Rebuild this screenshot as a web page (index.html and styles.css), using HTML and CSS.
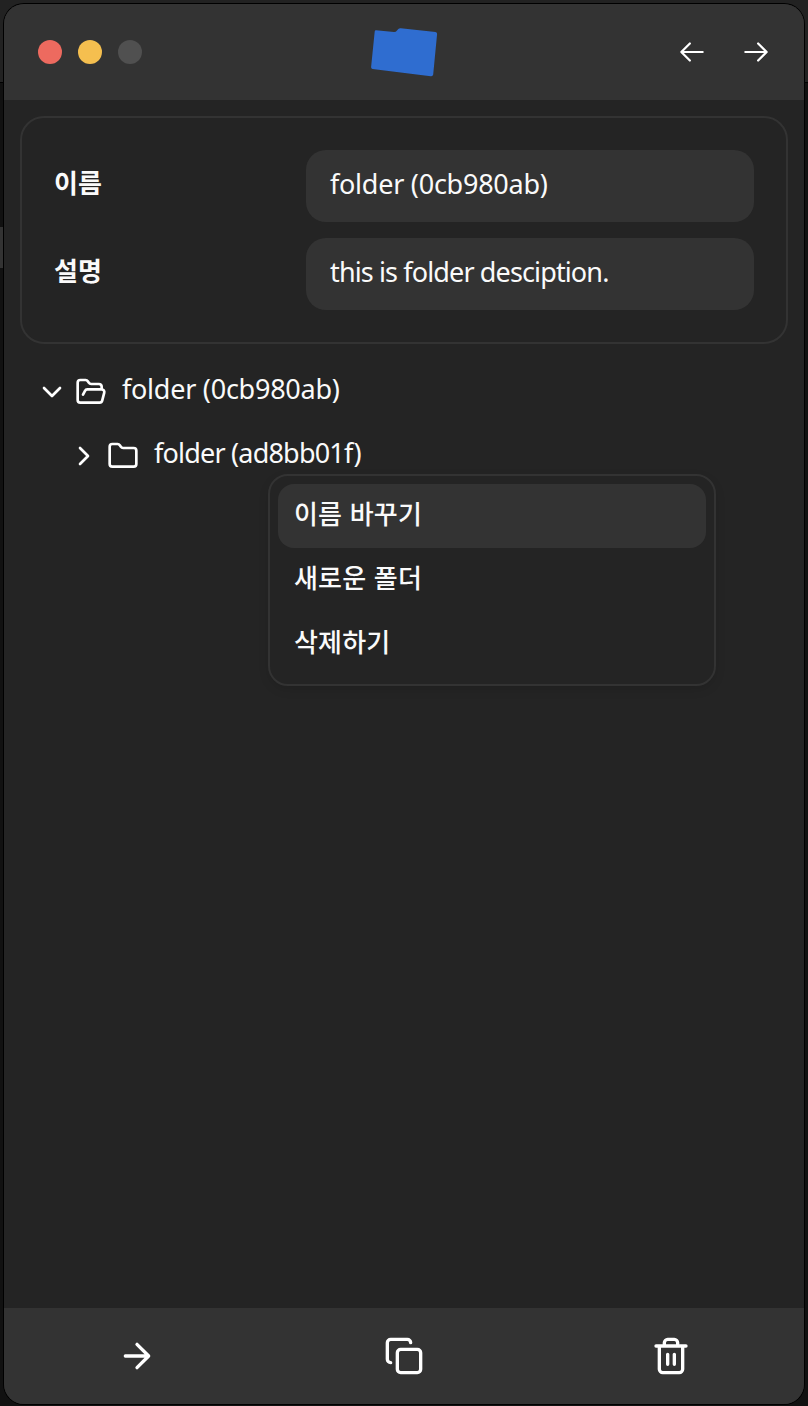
FILE: index.html
```html
<!DOCTYPE html>
<html lang="ko">
<head>
<meta charset="utf-8">
<title>folder</title>
<link rel="stylesheet" href="styles.css">
</head>
<body>
<div class="window">
  <header class="titlebar">
    <div class="lights"><span class="light close"></span><span class="light minimize"></span><span class="light disabled"></span></div>
    <svg class="logo" viewBox="1 -1 68 50"><path d="M6 2.200 24 4q2 0 3-1.500l1.300-1.500q1-1 2.500-.8L65.500 4q1.800.3 1.600 2L63.200 46.500q-.4 2-2.400 1.700L2.500 41q-1.600-.3-1.400-2L4.700 3.500Q4.900 2.100 6 2.200Z"/></svg>
    <nav class="history">
      <svg class="icon-nav" viewBox="0 0 15 15"><path d="M6.500 3.500 2.500 7.500l4 4M2.500 7.500h10"/></svg>
      <svg class="icon-nav" viewBox="0 0 15 15"><path d="m8.500 3.500 4 4-4 4M12.500 7.500h-10"/></svg>
    </nav>
  </header>
  <main class="content">
    <section class="details">
      <div class="field"><span class="label">이름</span><div class="value">folder (0cb980ab)</div></div>
      <div class="field"><span class="label">설명</span><div class="value desc">this is folder desciption.</div></div>
    </section>
    <div class="tree">
      <div class="node">
        <svg class="icon" viewBox="0 0 24 24"><path d="m6 9 6 6 6-6"/></svg>
        <svg class="icon" viewBox="0 0 24 24"><path d="m6 14 1.500-2.900A2 2 0 0 1 9.240 10H20a2 2 0 0 1 1.940 2.500l-1.540 6a2 2 0 0 1-1.950 1.500H4a2 2 0 0 1-2-2V5a2 2 0 0 1 2-2h3.900a2 2 0 0 1 1.690.9l.81 1.200a2 2 0 0 0 1.670.9H18a2 2 0 0 1 2 2v2"/></svg>
        <span class="name">folder (0cb980ab)</span>
      </div>
      <div class="node child">
        <svg class="icon" viewBox="0 0 24 24"><path d="m9 18 6-6-6-6"/></svg>
        <svg class="icon" viewBox="0 0 24 24"><path d="M20 20a2 2 0 0 0 2-2V8a2 2 0 0 0-2-2h-7.900a2 2 0 0 1-1.690-.9L9.600 3.900A2 2 0 0 0 7.930 3H4a2 2 0 0 0-2 2v13a2 2 0 0 0 2 2Z"/></svg>
        <span class="name second">folder (ad8bb01f)</span>
      </div>
    </div>
  </main>
  <footer class="toolbar">
    <svg class="icon-tool" viewBox="0 0 24 24"><path d="M5 12h14M12 5l7 7-7 7"/></svg>
    <svg class="icon-tool" viewBox="0 0 24 24"><rect width="14" height="14" x="8" y="8" rx="2"/><path d="M4 16c-1.100 0-2-.9-2-2V4c0-1.100.9-2 2-2h10c1.100 0 2 .9 2 2"/></svg>
    <svg class="icon-tool" viewBox="0 0 24 24"><path d="M3 6h18M19 6v14c0 1-1 2-2 2H7c-1 0-2-1-2-2V6M8 6V4c0-1 1-2 2-2h4c1 0 2 1 2 2v2M10 11v6M14 11v6"/></svg>
  </footer>
  <div class="menu">
    <div class="item active">이름 바꾸기</div>
    <div class="item">새로운 폴더</div>
    <div class="item">삭제하기</div>
  </div>
</div>
</body>
</html>
```
FILE: styles.css
```css
* { box-sizing: border-box; }
body {
  margin: 0;
  height: 1406px;
  padding: 4px 4px 2px;
  overflow: hidden;
  color: #fafafa;
  background:
    linear-gradient(#333, #333) 0 227px / 4px 41px no-repeat,
    linear-gradient(#222 0 82px, #000 82px 83px, #111 83px);
  font: 500 26px "Noto Sans CJK KR", sans-serif;
}
svg { display: block; flex: none; }
.window {
  position: relative;
  display: flex;
  flex-direction: column;
  width: 800px;
  height: 1400px;
  overflow: clip;
  border-radius: 20px;
  background: #242424;
  box-shadow: 0 0 0 1px #000;
}
.titlebar {
  display: grid;
  grid-template-columns: 1fr 68px 1fr;
  align-items: center;
  height: 96px;
  padding: 0 32px 0 34px;
  background: #333;
}
.lights { display: flex; gap: 16px; }
.light { width: 24px; height: 24px; border-radius: 50%; }
.close { background: #ed6a5f; }
.minimize { background: #f5bf4f; }
.disabled { background: #505050; }
.logo { width: 68px; height: 50px; overflow: visible; fill: #2f6dd0; }
.history { display: flex; justify-content: flex-end; gap: 32px; }
.icon-nav { width: 32px; height: 32px; fill: none; stroke: #fff; stroke-width: 1.05; stroke-linecap: round; stroke-linejoin: round; }
.content { flex: 1; padding: 16px; }
.details {
  display: flex;
  flex-direction: column;
  gap: 16px;
  height: 228px;
  padding: 32px;
  border: 2px solid #333;
  border-radius: 24px;
}
.field { display: grid; grid-template-columns: 252px 448px; height: 72px; }
.label { font-weight: 700; line-height: 64px; letter-spacing: .2px; }
.value {
  height: 72px;
  padding: 0 24px;
  border-radius: 20px;
  background: #333;
  font: 400 27px/67px "Noto Sans", sans-serif;
  letter-spacing: -.25px;
}
.desc { letter-spacing: -.87px; }
.tree { padding-top: 16px; }
.node { display: flex; align-items: center; gap: 7px; height: 64px; padding-left: 16px; }
.child { padding-left: 48px; }
.icon { width: 32px; height: 32px; fill: none; stroke: #fff; stroke-width: 2; stroke-linecap: round; stroke-linejoin: round; }
.name { margin-left: 8px; height: 64px; font: 400 27px/58px "Noto Sans", sans-serif; letter-spacing: -.25px; }
.second { letter-spacing: -.8px; }
.toolbar {
  display: grid;
  grid-template-columns: repeat(3, 1fr);
  align-items: center;
  justify-items: center;
  height: 96px;
  background: #333;
}
.icon-tool { width: 40px; height: 40px; fill: none; stroke: #fff; stroke-width: 2; stroke-linecap: round; stroke-linejoin: round; }
.menu {
  position: absolute;
  left: 264px;
  top: 470px;
  width: 448px;
  height: 212px;
  padding: 8px;
  border: 2px solid #333;
  border-radius: 20px;
  background: #242424;
  box-shadow: 0 4px 12px -2px rgba(0, 0, 0, .15);
}
.item { height: 64px; padding: 0 16px; border-radius: 16px; line-height: 58px; letter-spacing: .2px; }
.active { background: #333; }
```
